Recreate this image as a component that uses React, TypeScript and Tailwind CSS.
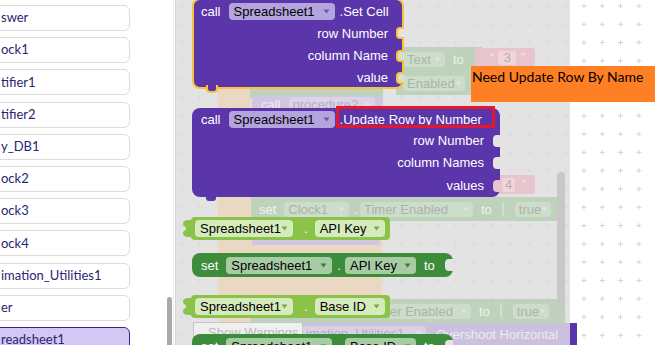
import React from "react";

function Arrow({ color }: { color: string }) {
  return (
    <svg width="7" height="5" viewBox="0 0 7 5" className="shrink-0">
      <path d="M0.5 0.5H6.5L3.5 4.5Z" fill={color} />
    </svg>
  );
}

function Pill({ cls, text, tcls, arrow }: { cls: string; text: string; tcls: string; arrow: string }) {
  return (
    <div className={`h-[17px] rounded-[4px] flex items-center justify-between pl-[5px] pr-[5px] shrink-0 ${cls}`}>
      <span className={`text-[13px] leading-none whitespace-nowrap ${tcls}`}>{text}</span>
      <Arrow color={arrow} />
    </div>
  );
}

function OutTab({ color }: { color: string }) {
  return (
    <svg width="9" height="17" viewBox="0 0 9 17" className="absolute left-[-8px] top-[3px]">
      <path d="M9 0 H6 C2 0 0 1 0 4 C0 6.5 3 6 3 8.5 C3 11 0 10.5 0 13 C0 16 2 17 6 17 H9 Z" fill={color} />
    </svg>
  );
}

function Getter({ top, prop }: { top: string; prop: string }) {
  return (
    <div className={`absolute left-[15px] w-[199px] h-[23px] rounded-[4px] bg-[#8bc249] flex items-center pl-[4px] ${top}`}>
      <OutTab color="#8bc249" />
      <Pill cls="w-[98px] bg-[#d6ebbb]" text="Spreadsheet1" tcls="text-black" arrow="#78a845" />
      <span className="ml-[11px] mr-[7px] text-white text-[13px] leading-none">.</span>
      <Pill cls="w-[70px] bg-[#d6ebbb]" text={prop} tcls="text-black" arrow="#78a845" />
    </div>
  );
}

function Setter({ top, prop }: { top: string; prop: string }) {
  return (
    <div className={`absolute left-[16px] w-[261px] h-[24px] rounded-[8px] bg-[#3d8c3b] flex items-center pl-[9px] ${top}`}>
      <span className="text-white text-[13px] leading-none">set</span>
      <Pill cls="ml-[8px] w-[106px] bg-[#a7cca4]" text="Spreadsheet1" tcls="text-black" arrow="#3d7c3b" />
      <span className="ml-[5px] mr-[4px] text-white text-[13px] leading-none">.</span>
      <Pill cls="w-[71px] bg-[#a7cca4]" text={prop} tcls="text-black" arrow="#3d7c3b" />
      <span className="ml-[8px] text-white text-[13px] leading-none">to</span>
      <div className="absolute right-0 top-[6px] w-[8px] h-[12px] bg-[#e4e4e4] rounded-l-[4px]" />
    </div>
  );
}

function FPill({ cls, text }: { cls: string; text: string }) {
  return (
    <div className={`h-[15px] rounded-[4px] flex items-center justify-between pl-[4px] pr-[4px] shrink-0 ${cls}`}>
      <span className="text-[13px] leading-none whitespace-nowrap">{text}</span>
      <Arrow color="#dde6db" />
    </div>
  );
}

const items = [
  "swer",
  "ock1",
  "tifier1",
  "tifier2",
  "y_DB1",
  "ock2",
  "ock3",
  "ock4",
  "imation_Utilities1",
  "er",
];

export default function App() {
  return (
    <div className="w-[655px] h-[345px] flex overflow-hidden bg-white font-['Liberation_Sans',Arial,sans-serif]">
      {/* Left component list */}
      <div className="relative w-[176px] h-full shrink-0 bg-white border-r border-[#d4d4d4]">
        <div className="absolute left-[173px] top-0 bottom-0 w-px bg-[#ececec]" />
        <div className="flex flex-col gap-[6.2px] pt-[5px] w-[130px] font-['Lato','Open_Sans',sans-serif] text-[13px] text-[#2d2470]">
          {items.map((t) => (
            <div key={t} className="h-[26px] -ml-[10px] pl-[10px] flex items-center bg-white border border-[#dcdcdc] rounded-[6px] whitespace-nowrap">
              {t}
            </div>
          ))}
          <div className="h-[26px] -ml-[10px] pl-[10px] flex items-center bg-[#d3c7f3] border border-[#40208f] rounded-[6px] whitespace-nowrap">
            readsheet1
          </div>
        </div>
        <div className="absolute left-[167px] top-[297px] bottom-0 w-[5px] rounded-t-[3px] bg-[#a9a9a9]" />
      </div>

      {/* Canvas */}
      <div className="relative flex-1 h-full overflow-hidden bg-white">
        <svg className="absolute inset-0" width="479" height="345">
          <defs>
            <pattern id="grid" x="-3.8" y="-3.2" width="18.3" height="18.3" patternUnits="userSpaceOnUse">
              <path d="M6.65 9.15H11.65M9.15 6.65V11.65" stroke="#d2d2d2" strokeWidth="1" />
            </pattern>
          </defs>
          <rect width="479" height="345" fill="url(#grid)" />
        </svg>

        {/* Flyout background */}
        <div className="absolute left-0 top-0 bottom-0 w-[394px] bg-[rgba(221,221,221,0.82)]" />

        {/* Faded workspace blocks beneath the flyout */}
        <div className="absolute left-[42px] top-[88px] w-[33px] h-[242px] bg-[#ead8c2]" />
        <div className="absolute left-[42px] top-[240px] w-[164px] h-[60px] bg-[#ead8c2]" />
        <div className="absolute left-[74px] top-[86px] w-[133px] h-[12px] bg-[#bfd2bb]" />
        <div className="absolute left-[76px] top-[96px] w-[131px] h-[16px] bg-[#cfc6e0] flex items-center pl-[9px] text-[13px] text-[#eeeaf5]">
          <span className="leading-none">call</span>
          <FPill cls="ml-[8px] w-[86px] bg-[#dbd4e8] text-[#b3adc0]" text="procedure2" />
        </div>
        <div className="absolute left-[76px] top-[239px] w-[128px] h-[6px] bg-[#cfc6e0]" />

        <div className="absolute left-[220px] top-[47px] w-[86px] h-[24px] bg-[#bfd2bb] flex items-center pl-[7px] text-[13px] text-[#eef3ed]">
          <FPill cls="w-[42px] bg-[#cddccb] text-[#aab5a8]" text="Text" />
          <span className="ml-[8px] leading-none">to</span>
        </div>
        <div className="absolute left-[299px] top-[48px] w-[60px] h-[19px] rounded-[3px] bg-[#e8c4cc] flex items-center pl-[15px] text-[13px] text-[#f5e6ea]">
          <span className="leading-none">“</span>
          <div className="ml-[4px] w-[18px] h-[14px] rounded-[3px] bg-[#efd6dc] flex items-center justify-center text-[#bba9ad] leading-none">3</div>
          <span className="ml-[5px] leading-none">”</span>
        </div>
        <div className="absolute left-[220px] top-[71px] w-[90px] h-[24px] bg-[#bfd2bb] flex items-center pl-[7px] text-[13px]">
          <FPill cls="w-[62px] bg-[#cddccb] text-[#aab5a8]" text="Enabled" />
        </div>
        <div className="absolute left-[317px] top-[175px] w-[42px] h-[19px] rounded-[3px] bg-[#e8c4cc] flex items-center pl-[9px] text-[13px] text-[#f5e6ea]">
          <div className="w-[13px] h-[14px] rounded-[3px] bg-[#efd6dc] flex items-center justify-center text-[#bba9ad] leading-none">4</div>
          <span className="ml-[7px] leading-none">”</span>
        </div>

        {/* faded "set Clock1 . Timer Enabled to true" row */}
        <div className="absolute left-[75px] top-[197px] w-[314px] h-[24px] bg-[#bfd2bb] flex items-center pl-[8px] text-[#eef3ed] text-[13px]">
          <span className="leading-none">set</span>
          <FPill cls="ml-[8px] w-[65px] bg-[#cddccb] text-[#aab5a8]" text="Clock1" />
          <span className="ml-[5px] mr-[2px] leading-none">.</span>
          <FPill cls="w-[113px] bg-[#cddccb] text-[#aab5a8]" text="Timer Enabled" />
          <span className="ml-[8px] leading-none">to</span>
          <div className="ml-[10px] w-[4px] h-[16px] border-l-2 border-[#d3e0d1] rounded-l-[4px]" />
          <FPill cls="ml-[9px] w-[36px] bg-[#cddccb] text-[#aab5a8]" text="true" />
        </div>
        {/* second faded row, partly under the Base ID getter */}
        <div className="absolute left-[75px] top-[299px] w-[314px] h-[24px] bg-[#bfd2bb]" />
        <div className="absolute left-[214px] top-[299px] h-[24px] flex items-center text-[#eef3ed] text-[13px]">
          <div className="h-[15px] w-[81px] rounded-r-[4px] bg-[#cddccb] text-[#aab5a8] flex items-center justify-between pr-[4px]">
            <span className="leading-none whitespace-nowrap">er Enabled</span>
            <Arrow color="#dde6db" />
          </div>
          <span className="ml-[8px] leading-none">to</span>
          <div className="ml-[10px] w-[4px] h-[16px] border-l-2 border-[#d3e0d1] rounded-l-[4px]" />
          <FPill cls="ml-[9px] w-[36px] bg-[#cddccb] text-[#aab5a8]" text="true" />
        </div>

        <div className="absolute left-[127px] top-[323px] w-[267px] h-[30px] bg-[#cbc1de] flex items-start pt-[3px] text-[13px] text-[#eeeaf5]">
          <div className="h-[15px] w-[123px] rounded-r-[4px] bg-[#d9d2e7] text-[#b3adc0] flex items-center justify-between pl-[3px] pr-[4px]">
            <span className="leading-none whitespace-nowrap">imation_Utilities1</span>
            <Arrow color="#e6e1ef" />
          </div>
          <span className="ml-[10px] mt-[2px] leading-none whitespace-nowrap">Overshoot Horizontal</span>
        </div>
        <div className="absolute left-[394px] top-[323px] w-[7px] h-[30px] bg-[#5b36ab]" />
        <div className="absolute left-[17px] top-[322px] w-[110px] h-[30px] bg-[#efefef] border border-[#c6c6c6] pl-[14px] pt-[3px] text-[13px] text-[#b9b9b9] leading-none whitespace-nowrap">
          Show Warnings
        </div>

        {/* Flyout scrollbar */}
        <div className="absolute left-[381px] top-[172px] w-[8px] h-[138px] rounded-full bg-[#c8c8c8]" />

        {/* Set Cell block (selected) */}
        <div className="absolute left-[16px] top-[-2px] w-[212px] h-[91px] rounded-[8px] bg-[#5b36ab] border-2 border-[#f8c33a]">
          <div className="flex items-center h-[23px] pl-[7px] text-white text-[13px]">
            <span className="leading-none">call</span>
            <Pill cls="ml-[8px] w-[106px] bg-[#b4a4dd]" text="Spreadsheet1" tcls="text-black" arrow="#6f55b5" />
            <span className="ml-[5px] leading-none">.Set Cell</span>
          </div>
          <div className="flex flex-col items-end pr-[14px] text-white text-[13px]">
            <div className="h-[22px] flex items-center">row Number</div>
            <div className="h-[22px] flex items-center">column Name</div>
            <div className="h-[22px] flex items-center">value</div>
          </div>
          <div className="absolute right-[-2px] top-[27px] w-[8px] h-[12px] bg-[#e4e4e4] border-2 border-r-0 border-[#f8c33a] rounded-l-[4px]" />
          <div className="absolute right-[-2px] top-[50px] w-[8px] h-[12px] bg-[#d4dfd2] border-2 border-r-0 border-[#f8c33a] rounded-l-[4px]" />
          <div className="absolute right-[-2px] top-[72px] w-[8px] h-[12px] bg-[#d4dfd2] border-2 border-r-0 border-[#f8c33a] rounded-l-[4px]" />
          <div className="absolute left-[12px] bottom-[-6px] w-[12px] h-[8px] bg-[#5b36ab] border-2 border-t-0 border-[#f8c33a] rounded-b-[4px]" />
        </div>

        {/* Update Row by Number block */}
        <div className="absolute left-[16px] top-[108px] w-[308px] h-[89px] rounded-[8px] bg-[#5b36ab]">
          <div className="flex items-center h-[22px] pl-[9px] text-white text-[13px]">
            <span className="leading-none">call</span>
            <Pill cls="ml-[8px] w-[106px] bg-[#b4a4dd]" text="Spreadsheet1" tcls="text-black" arrow="#6f55b5" />
            <span className="ml-[5px] leading-none">.Update Row by Number</span>
          </div>
          <div className="flex flex-col items-end pr-[16px] text-white text-[13px]">
            <div className="h-[22px] flex items-center">row Number</div>
            <div className="h-[22px] flex items-center">column Names</div>
            <div className="h-[23px] flex items-center">values</div>
          </div>
          <div className="absolute right-0 top-[27px] w-[7px] h-[12px] bg-[#e4e4e4] rounded-l-[4px]" />
          <div className="absolute right-0 top-[49px] w-[7px] h-[12px] bg-[#e4e4e4] rounded-l-[4px]" />
          <div className="absolute right-0 top-[72px] w-[7px] h-[12px] bg-[#e8c4cc] rounded-l-[4px]" />
          <div className="absolute left-[14px] bottom-[-4px] w-[10px] h-[5px] bg-[#5b36ab] rounded-b-[3px]" />
        </div>
        <div className="absolute left-[160px] top-[106px] w-[159px] h-[22px] border-[3px] border-[#e5172a]" />

        <Getter top="top-[217px]" prop="API Key" />
        <Setter top="top-[253px]" prop="API Key" />
        <Getter top="top-[295px]" prop="Base ID" />
        <Setter top="top-[334px]" prop="Base ID" />

        {/* Note */}
        <div className="absolute left-[295px] top-[66px] w-[184px] h-[36px] bg-[#ff8024] pl-[1px] pt-[2px] font-['Lato','Open_Sans',sans-serif] text-[14px] leading-[17px] text-black whitespace-nowrap">
          Need Update Row By Name
        </div>
      </div>
    </div>
  );
}
